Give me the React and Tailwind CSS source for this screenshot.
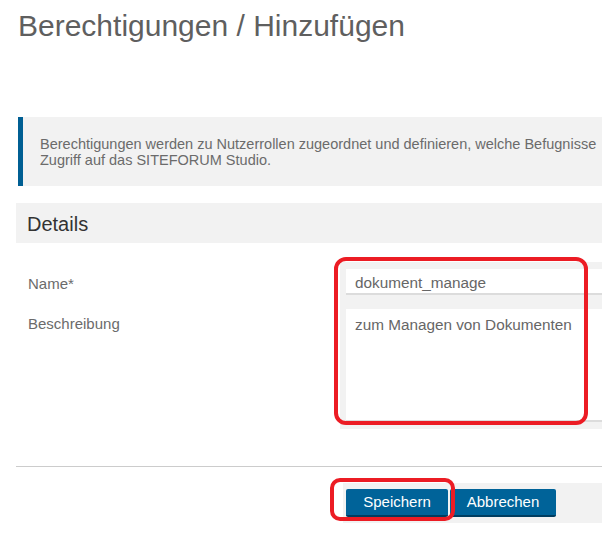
export default function App() {
  return (
    <div className="relative w-[602px] h-[543px] overflow-hidden bg-white font-['Liberation_Sans',Arial,sans-serif]">
      <div className="w-[900px] pl-[18px]">
        {/* Page title */}
        <h1 className="pt-[8px] text-[30px] leading-[36px] text-[#5f5f5f]">Berechtigungen / Hinzufügen</h1>

        {/* Info box */}
        <div className="mt-[73px] h-[69px] border-l-[5px] border-[#005f93] bg-[#f2f2f2] pl-[17px] pt-[19px] text-[14.5px] leading-[16px] text-[#6b6b6b]">
          Berechtigungen werden zu Nutzerrollen zugeordnet und definieren, welche Befugnisse
          <br />
          Zugriff auf das SITEFORUM Studio.
        </div>

        {/* Details section */}
        <div className="mt-[17px] -ml-[2px] flex h-[40px] items-center bg-[#f2f2f2] pl-[11px] pt-[2px] text-[20px] text-[#333]">
          Details
        </div>

        <div className="mt-[19px] flex">
          <div className="w-[322px] pl-[10px] text-[15px] text-[#6b6b6b]">
            <div className="h-[40px] pt-[11px]">Name*</div>
            <div className="pt-[11px]">Beschreibung</div>
          </div>
          <div className="flex-1 bg-[#f2f2f2] px-[6px] py-[7px]">
            <div className="h-[26px] border-b-2 border-[#dcdcdc] bg-white pl-[9px] pt-[4px] text-[15.3px] leading-[20px] text-[#666]">
              dokument_manage
            </div>
            <div className="mt-[14px] h-[113px] border-b-2 border-[#dcdcdc] bg-white pl-[9px] pt-[5px] text-[15.3px] text-[#666]">
              zum Managen von Dokumenten
            </div>
          </div>
        </div>

        <div className="mt-[37px] -ml-[2px] h-px bg-[#cccccc]" />

        {/* Actions */}
        <div className="mt-[16px] ml-[325px] flex h-[40px] items-center bg-[#f2f2f2] pl-[3px]">
          <button className="h-[28px] w-[102px] rounded-[2px] border-b-2 border-[#003d60] bg-[#006399] text-[15px] text-white">
            Speichern
          </button>
          <button className="ml-[2px] h-[28px] w-[106px] rounded-[2px] border-b-2 border-[#003d60] bg-[#006399] text-[15px] text-white">
            Abbrechen
          </button>
        </div>
      </div>

      {/* Red annotations */}
      <div className="absolute left-[334px] top-[257px] h-[168px] w-[254px] rounded-[12px] border-[4px] border-[#ec1c24]" />
      <div className="absolute left-[330px] top-[478px] h-[43px] w-[125px] rounded-[10px] border-[4px] border-[#ec1c24]" />
    </div>
  )
}
